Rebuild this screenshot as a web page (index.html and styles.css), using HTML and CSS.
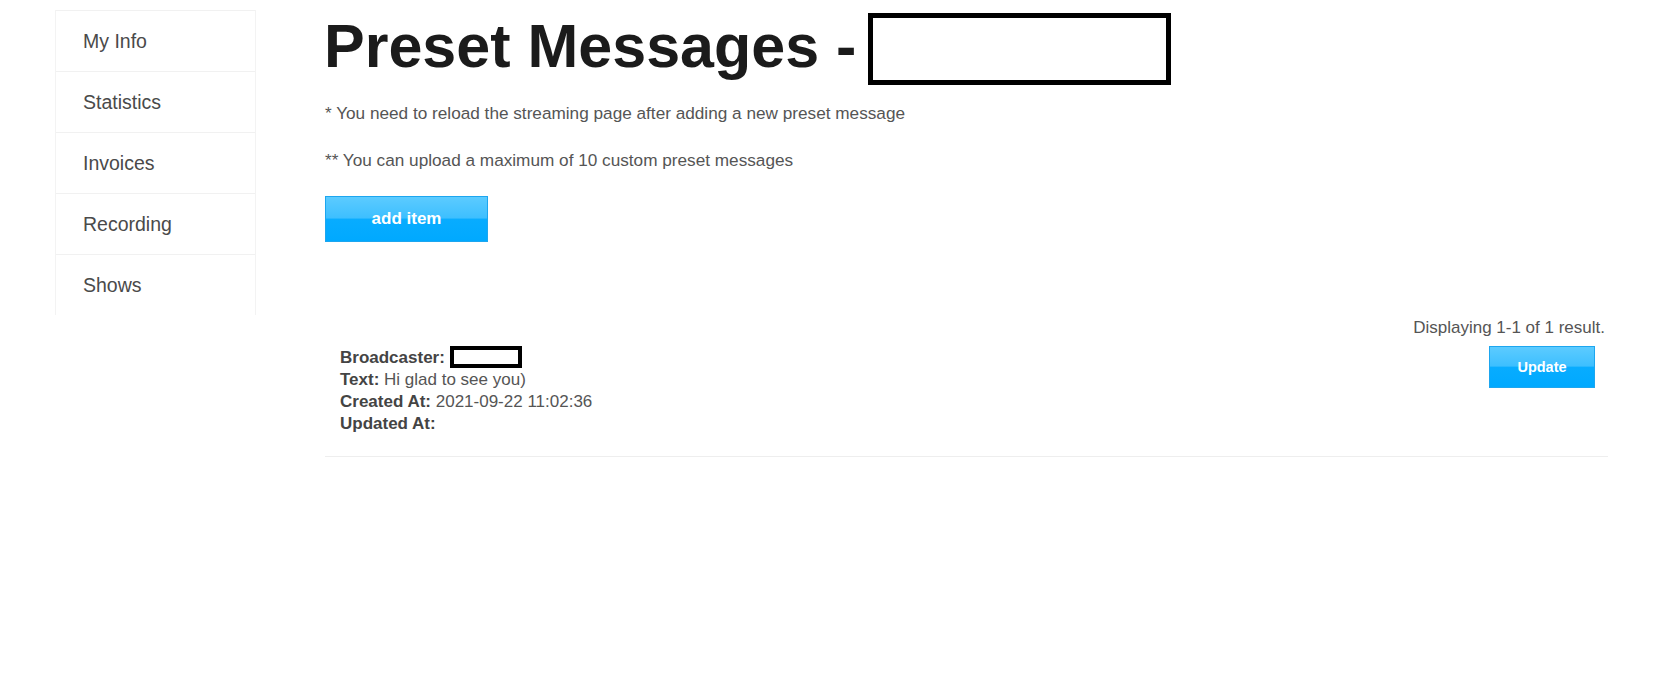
FILE: index.html
```html
<!DOCTYPE html>
<html lang="en">
<head>
    <meta charset="UTF-8">
    <meta name="viewport" content="width=device-width, initial-scale=1.0">
    <title>Preset Messages</title>
    <link rel="stylesheet" href="styles.css">
</head>
<body>
    <div class="page">
        <ul class="side-menu">
            <li><a href="#">My Info</a></li>
            <li><a href="#">Statistics</a></li>
            <li><a href="#">Invoices</a></li>
            <li><a href="#">Recording</a></li>
            <li><a href="#">Shows</a></li>
        </ul>

        <div class="content">
            <h1 class="page-title">
                <span class="title-text">Preset Messages -</span>
                <span class="redacted redacted-title"></span>
            </h1>

            <p class="note">* You need to reload the streaming page after adding a new preset message</p>
            <p class="note">** You can upload a maximum of 10 custom preset messages</p>

            <div class="toolbar">
                <a href="#" class="btn btn-add">add item</a>
            </div>

            <div class="list">
                <div class="summary">Displaying 1-1 of 1 result.</div>
                <div class="item">
                    <div class="item-info">
                        <div><b>Broadcaster:</b> <span class="redacted redacted-name"></span></div>
                        <div><b>Text:</b> Hi glad to see you)</div>
                        <div><b>Created At:</b> 2021-09-22 11:02:36</div>
                        <div><b>Updated At:</b></div>
                    </div>
                    <a href="#" class="btn btn-update">Update</a>
                </div>
            </div>
        </div>
    </div>
</body>
</html>
```

FILE: styles.css
```css
body {
    margin: 0;
    font-family: "Liberation Sans", Arial, sans-serif;
    color: #555;
    background: #fff;
}

.page {
    display: flex;
    align-items: flex-start;
    padding: 10px 53px 0 55px;
}

/* left menu */
.side-menu {
    list-style: none;
    margin: 0;
    padding: 0;
    width: 201px;
    flex-shrink: 0;
    border-left: 1px solid #f3f3f3;
    border-right: 1px solid #f3f3f3;
    box-sizing: border-box;
}

.side-menu li {
    border-top: 1px solid #f1f1f1;
}

.side-menu a {
    display: block;
    height: 60px;
    line-height: 60px;
    padding-left: 27px;
    font-size: 19.5px;
    color: #4a4a4a;
    text-decoration: none;
}

/* main */
.content {
    flex: 1;
    margin-left: 69px;
    padding-top: 3px;
}

.page-title {
    display: flex;
    align-items: flex-start;
    margin: 0 0 15.5px;
    font-size: 61px;
    font-weight: bold;
    color: #1b1b1b;
}

.title-text {
    line-height: 67.7px;
    margin-left: -1px;
}

.redacted {
    display: inline-block;
    box-sizing: border-box;
    border: 5px solid #000;
    background: #fff;
}

.redacted-title {
    width: 303px;
    height: 72px;
    margin-left: 12px;
}

.redacted-name {
    width: 72px;
    height: 22px;
    border-width: 4px;
    vertical-align: -5px;
}

.note {
    margin: 0 0 23.5px;
    font-size: 17.2px;
    line-height: 24px;
    color: #555;
}

.toolbar {
    margin-top: 6px;
}

.btn {
    display: block;
    box-sizing: border-box;
    border: 1px solid #1da6ef;
    background: linear-gradient(#5ccbff 0%, #3dbfff 48%, #08acff 50%, #00a9ff 100%);
    color: #fff;
    font-weight: bold;
    text-align: center;
    text-decoration: none;
}

.btn-add {
    width: 163px;
    height: 46px;
    line-height: 44px;
    font-size: 17px;
}

.list {
    margin-top: 74px;
}

.summary {
    text-align: right;
    font-size: 17px;
    line-height: 24px;
    padding-right: 3px;
    margin-bottom: 6px;
}

.item {
    display: flex;
    justify-content: space-between;
    align-items: flex-start;
    padding: 0 13px 21px 15px;
    border-bottom: 1px solid #eee;
}

.item-info {
    font-size: 17px;
    line-height: 22px;
    color: #555;
}

.item-info b {
    color: #444;
}

.btn-update {
    width: 106px;
    height: 42px;
    line-height: 40px;
    font-size: 14.5px;
}
```
